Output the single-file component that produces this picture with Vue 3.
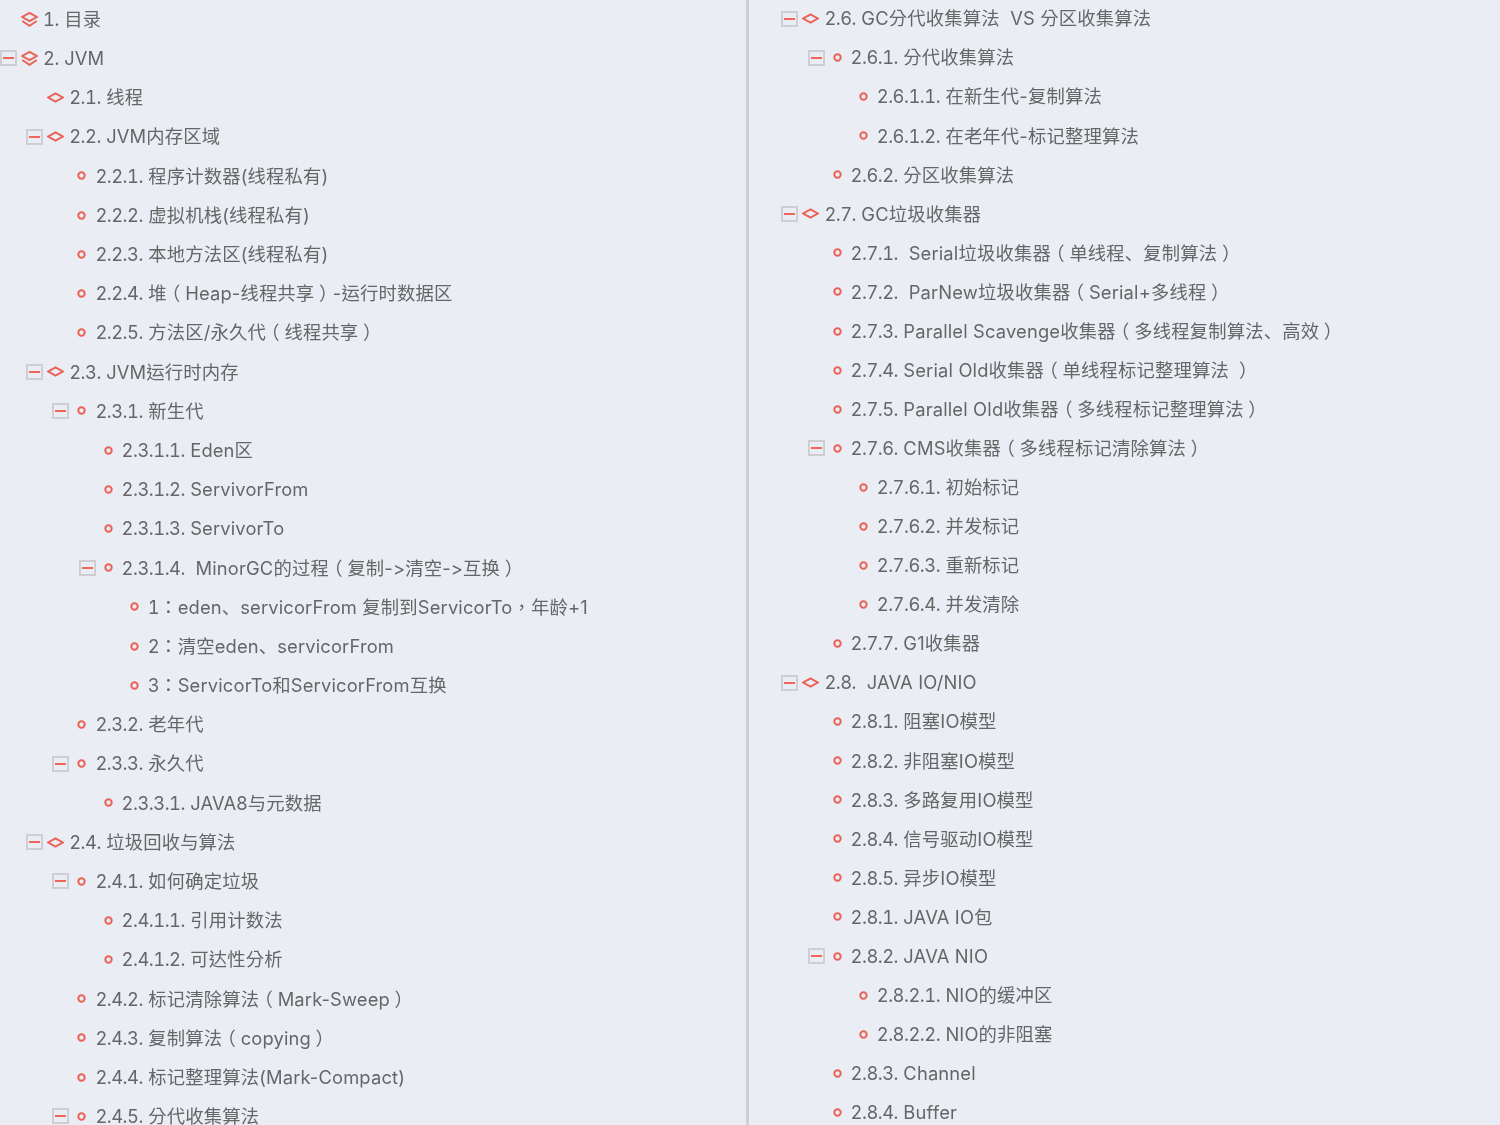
<script setup>
const punct = { '（': 'paren', '）': 'paren', '、': 'pause' }

const parse = (src) =>
  src.map(([level, kind, open, text]) => ({
    level,
    kind,
    open,
    text,
    parts: text
      .split(/^([\d.]+)|([（）、])/)
      .filter(Boolean)
      .map((s, i) => ({ s, cls: punct[s] || (i === 0 && /^[\d.]+$/.test(s) ? 'num' : '') })),
  }))

const left = parse([
  [0, 'layers', false, '1. 目录'],
  [0, 'layers', true, '2. JVM'],
  [1, 'diamond', false, '2.1. 线程'],
  [1, 'diamond', true, '2.2. JVM内存区域'],
  [2, 'dot', false, '2.2.1. 程序计数器(线程私有)'],
  [2, 'dot', false, '2.2.2. 虚拟机栈(线程私有)'],
  [2, 'dot', false, '2.2.3. 本地方法区(线程私有)'],
  [2, 'dot', false, '2.2.4. 堆（Heap-线程共享）-运行时数据区'],
  [2, 'dot', false, '2.2.5. 方法区/永久代（线程共享）'],
  [1, 'diamond', true, '2.3. JVM运行时内存'],
  [2, 'dot', true, '2.3.1. 新生代'],
  [3, 'dot', false, '2.3.1.1. Eden区'],
  [3, 'dot', false, '2.3.1.2. ServivorFrom'],
  [3, 'dot', false, '2.3.1.3. ServivorTo'],
  [3, 'dot', true, '2.3.1.4.  MinorGC的过程（复制->清空->互换）'],
  [4, 'dot', false, '1：eden、servicorFrom 复制到ServicorTo，年龄+1'],
  [4, 'dot', false, '2：清空eden、servicorFrom'],
  [4, 'dot', false, '3：ServicorTo和ServicorFrom互换'],
  [2, 'dot', false, '2.3.2. 老年代'],
  [2, 'dot', true, '2.3.3. 永久代'],
  [3, 'dot', false, '2.3.3.1. JAVA8与元数据'],
  [1, 'diamond', true, '2.4. 垃圾回收与算法'],
  [2, 'dot', true, '2.4.1. 如何确定垃圾'],
  [3, 'dot', false, '2.4.1.1. 引用计数法'],
  [3, 'dot', false, '2.4.1.2. 可达性分析'],
  [2, 'dot', false, '2.4.2. 标记清除算法（Mark-Sweep）'],
  [2, 'dot', false, '2.4.3. 复制算法（copying）'],
  [2, 'dot', false, '2.4.4. 标记整理算法(Mark-Compact)'],
  [2, 'dot', true, '2.4.5. 分代收集算法'],
])

const right = parse([
  [1, 'diamond', true, '2.6. GC分代收集算法  VS 分区收集算法'],
  [2, 'dot', true, '2.6.1. 分代收集算法'],
  [3, 'dot', false, '2.6.1.1. 在新生代-复制算法'],
  [3, 'dot', false, '2.6.1.2. 在老年代-标记整理算法'],
  [2, 'dot', false, '2.6.2. 分区收集算法'],
  [1, 'diamond', true, '2.7. GC垃圾收集器'],
  [2, 'dot', false, '2.7.1.  Serial垃圾收集器（单线程、复制算法）'],
  [2, 'dot', false, '2.7.2.  ParNew垃圾收集器（Serial+多线程）'],
  [2, 'dot', false, '2.7.3. Parallel Scavenge收集器（多线程复制算法、高效）'],
  [2, 'dot', false, '2.7.4. Serial Old收集器（单线程标记整理算法 ）'],
  [2, 'dot', false, '2.7.5. Parallel Old收集器（多线程标记整理算法）'],
  [2, 'dot', true, '2.7.6. CMS收集器（多线程标记清除算法）'],
  [3, 'dot', false, '2.7.6.1. 初始标记'],
  [3, 'dot', false, '2.7.6.2. 并发标记'],
  [3, 'dot', false, '2.7.6.3. 重新标记'],
  [3, 'dot', false, '2.7.6.4. 并发清除'],
  [2, 'dot', false, '2.7.7. G1收集器'],
  [1, 'diamond', true, '2.8.  JAVA IO/NIO'],
  [2, 'dot', false, '2.8.1. 阻塞IO模型'],
  [2, 'dot', false, '2.8.2. 非阻塞IO模型'],
  [2, 'dot', false, '2.8.3. 多路复用IO模型'],
  [2, 'dot', false, '2.8.4. 信号驱动IO模型'],
  [2, 'dot', false, '2.8.5. 异步IO模型'],
  [2, 'dot', false, '2.8.1. JAVA IO包'],
  [2, 'dot', true, '2.8.2. JAVA NIO'],
  [3, 'dot', false, '2.8.2.1. NIO的缓冲区'],
  [3, 'dot', false, '2.8.2.2. NIO的非阻塞'],
  [2, 'dot', false, '2.8.3. Channel'],
  [2, 'dot', false, '2.8.4. Buffer'],
])

const columns = [
  { id: 'left', rows: left },
  { id: 'right', rows: right },
]
</script>

<template>
  <div class="page">
    <section v-for="col in columns" :key="col.id" class="col" :class="col.id">
      <div v-for="row in col.rows" :key="row.text" class="row" :class="'lv' + row.level">
        <span class="toggle" :class="{ hidden: !row.open }"><i></i></span>
        <svg class="icon" viewBox="0 0 17 17" width="17" height="17" aria-hidden="true">
          <template v-if="row.kind === 'layers'">
            <path d="M8.5 1.8 L15.8 6 L8.5 10.2 L1.2 6 Z" />
            <path d="M1.2 10 L8.5 14.8 L15.8 10" />
          </template>
          <path v-else-if="row.kind === 'diamond'" d="M8.5 4.4 L15.8 8.5 L8.5 12.6 L1.2 8.5 Z" />
          <circle v-else cx="8.5" cy="8.5" r="3.2" />
        </svg>
        <span class="label"><span v-for="(part, i) in row.parts" :key="i" :class="part.cls">{{ part.s }}</span></span>
      </div>
    </section>
  </div>
</template>

<style>
html, body { margin: 0; background: #eaeef4; }
</style>

<style scoped>
.page {
  display: flex;
  height: 1125px;
  overflow: hidden;
  background: #eaeef4;
  font-family: "Inter", "Noto Sans CJK TC", sans-serif;
  font-size: 18.35px;
  letter-spacing: 0.15px;
  font-feature-settings: "calt" 0;
  color: #666;
  filter: blur(0.45px);
}
.col { flex: none; height: 1125px; overflow: hidden; }
.left { width: 746px; border-right: 3px solid #ccd0d6; }
.right { width: 751px; padding-left: 6.2px; box-sizing: border-box; }
.row {
  display: flex;
  align-items: center;
  white-space: pre;
}
.left .row { height: 39.2px; }
.left .row:first-child { margin-top: -0.5px; }
.right .row { height: 39.07px; }
.right .row:first-child { margin-top: -1px; }
.lv0 { padding-left: 0; }
.lv1 { padding-left: 26.2px; }
.lv2 { padding-left: 52.4px; }
.lv3 { padding-left: 78.6px; }
.lv4 { padding-left: 104.8px; }
.toggle {
  flex: none;
  width: 17px;
  height: 16px;
  margin-right: 4px;
  border: 2px solid #cdcfd3;
  box-sizing: border-box;
  display: flex;
  align-items: center;
  justify-content: center;
}
.toggle.hidden { visibility: hidden; }
.toggle i { display: block; width: 11px; height: 2px; background: #f0665a; }
.icon {
  flex: none;
  margin-right: 5px;
  fill: none;
  stroke: #ea6357;
  stroke-width: 2;
}
.label { line-height: 1; }
.num { letter-spacing: -0.5px; font-feature-settings: "calt" 0, "tnum" 1; }
.paren {
  font-feature-settings: "halt" 1, "calt" 0;
  padding: 0 0.25em;
}
.pause { font-family: "Noto Sans CJK SC", sans-serif; }
</style>
